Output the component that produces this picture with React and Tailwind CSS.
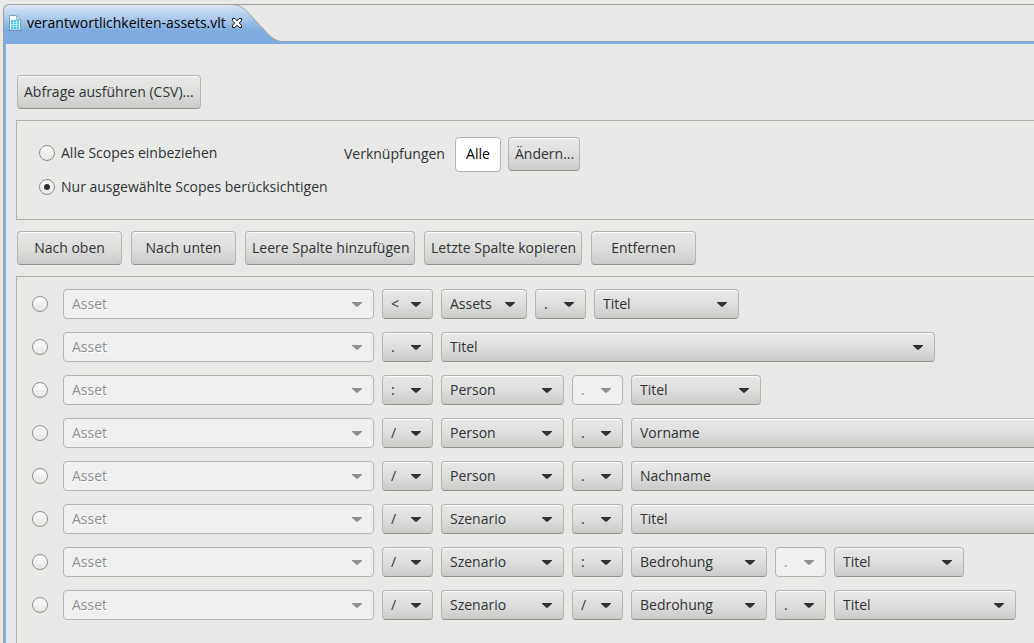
import React from "react";

const FACE =
  "rounded-[4px] border border-[#b4b4b1] border-b-[#92928e] bg-linear-to-b from-[#e8e8e6] via-[#dededc] to-[#cbcbc9] shadow-[inset_0_1px_0_#fafafa]";

const RADIO =
  "m-0 grid size-4 shrink-0 appearance-none place-content-center rounded-full border border-[#8f8f8a] bg-linear-to-b from-[#fcfcfc] to-[#e6e6e5] before:size-[6px] before:rounded-full before:content-[''] checked:before:bg-[#2e3436]";

function Button({ children, className = "" }) {
  return (
    <button type="button" className={`h-[34px] shrink-0 px-[6px] whitespace-nowrap ${FACE} ${className}`}>
      {children}
    </button>
  );
}

const WIDTHS = {
  source: "w-[311px]",
  op: "w-[51px]",
  assets: "w-[86px]",
  entity: "w-[123px]",
  threat: "w-[136px]",
  short: "w-[130px]",
  medium: "w-[145px]",
  long: "w-[182px]",
  full: "w-[494px]",
};

function Dropdown({ value, size, label, disabled = false }) {
  const look = disabled
    ? "rounded-[4px] border border-[#b4b4b1] bg-[#f0f0f0] text-[#8d9091] opacity-100 [text-shadow:1px_1px_0_#ffffff]"
    : FACE;
  return (
    <div className={`grid h-[30px] shrink-0 items-center ${WIDTHS[size]}`}>
      <select
        aria-label={label}
        disabled={disabled}
        defaultValue={value}
        className={`col-start-1 row-start-1 h-[30px] w-full appearance-none py-0 pr-6 pl-2 ${look}`}
      >
        <option>{value}</option>
      </select>
      <svg
        aria-hidden="true"
        viewBox="0 0 10 5"
        className={`pointer-events-none relative col-start-1 row-start-1 mr-3 h-[5px] w-[10px] justify-self-end ${
          disabled ? "text-[#8d9091]" : "text-[#2e3436]"
        }`}
      >
        <path d="M0 0H10V.7L6.2 4.3Q5 5.3 3.8 4.3L0 .7Z" fill="currentColor" />
      </svg>
    </div>
  );
}

const ROWS = [
  [["<", "op"], ["Assets", "assets"], [".", "op"], ["Titel", "medium"]],
  [[".", "op"], ["Titel", "full"]],
  [[":", "op"], ["Person", "entity"], [".", "op", true], ["Titel", "short"]],
  [["/", "op"], ["Person", "entity"], [".", "op"], ["Vorname", "full"]],
  [["/", "op"], ["Person", "entity"], [".", "op"], ["Nachname", "full"]],
  [["/", "op"], ["Szenario", "entity"], [".", "op"], ["Titel", "full"]],
  [["/", "op"], ["Szenario", "entity"], [":", "op"], ["Bedrohung", "threat"], [".", "op", true], ["Titel", "short"]],
  [["/", "op"], ["Szenario", "entity"], ["/", "op"], ["Bedrohung", "threat"], [".", "op"], ["Titel", "long"]],
];

function FileIcon() {
  return (
    <svg aria-hidden="true" viewBox="0 0 14 16" className="h-4 w-[14px] shrink-0">
      <path d="M0 15.5H14" stroke="#5d84b4" opacity=".8" />
      <path d="M1.5 .5H8.5L12.5 4.5V15H1.5Z" fill="#f1f8fa" stroke="#7fa3b0" />
      <path d="M8.5 .5V4.5H12.5Z" fill="#d2e4ea" stroke="#8fb0bd" />
      <path d="M3 5H11V14H3Z" fill="#3fc8f2" />
      <path d="M3 7.5H11M3 9.5H11M3 11.5H11M5.5 5V14M8.5 5V14" stroke="#d4f4fd" strokeWidth=".7" />
    </svg>
  );
}

function TabBar() {
  return (
    <header className="flex h-10 shrink-0 items-stretch">
      <div className="flex items-center gap-[5px] rounded-tl-[6px] border-t border-l border-[#a0a09c] bg-linear-to-b from-[#dce7f5] to-[#7fade1] to-65% pb-1 pl-1">
        <FileIcon />
        <span className="whitespace-nowrap text-black">verantwortlichkeiten-assets.vlt</span>
        <button
          type="button"
          aria-label="Schließen"
          className="relative z-10 -mr-3 flex size-3 items-center justify-center"
        >
          <svg aria-hidden="true" viewBox="0 0 12 12" className="size-3">
            <path
              d="M1.5 1.5H4L6 3.8L8 1.5H10.5V3.7L8.3 6L10.5 8.3V10.5H8L6 8.2L4 10.5H1.5V8.3L3.7 6L1.5 3.7Z"
              fill="#fff"
              stroke="#111"
            />
          </svg>
        </button>
      </div>
      <svg aria-hidden="true" viewBox="0 0 53 40" className="h-10 w-[53px] shrink-0">
        <defs>
          <linearGradient id="tab-fill" gradientUnits="userSpaceOnUse" x1="0" y1="0" x2="0" y2="40">
            <stop offset="0" stopColor="#dce7f5" />
            <stop offset=".65" stopColor="#7fade1" />
          </linearGradient>
        </defs>
        <path d="M0 .5C6 .5 11 2.5 16 7.5L37 30C42 35 46 37.5 53 37.5V40H0Z" fill="url(#tab-fill)" />
        <path d="M0 .5C6 .5 11 2.5 16 7.5L37 30C42 35 46 37.5 53 37.5" fill="none" stroke="#a0a09c" />
        <path d="M0 .5H53" stroke="#a0a09c" />
      </svg>
      <div className="flex flex-1 flex-col justify-end border-t border-[#a0a09c]">
        <div className="h-[3px] border-t border-[#8e9db0] bg-[#80afe3]" />
      </div>
    </header>
  );
}

export default function App() {
  return (
    <div className="flex min-h-screen flex-col overflow-hidden bg-[#e8e8e6] pt-1 pl-[3px] font-['Open_Sans','Noto_Sans',sans-serif] text-[14px] leading-5 text-[#2e3436]">
      <TabBar />
      <main className="flex flex-1 flex-col border-l border-[#a0a09c]">
        <div className="flex flex-1 flex-col border-l-2 border-[#80afe3] pt-[31px] pl-[10px]">
          <div className="flex pl-px">
            <Button>Abfrage ausführen (CSV)...</Button>
          </div>

          <section className="mt-[11px] flex h-[100px] border border-r-0 border-[#b0b0ad] pt-4 pl-[22px]">
            <fieldset className="flex w-[305px] shrink-0 flex-col gap-[14px] pt-[6px]">
              <label className="flex items-center gap-[6px]">
                <input type="radio" name="scope" className={RADIO} />
                Alle Scopes einbeziehen
              </label>
              <label className="flex items-center gap-[6px]">
                <input type="radio" name="scope" defaultChecked className={RADIO} />
                Nur ausgewählte Scopes berücksichtigen
              </label>
            </fieldset>
            <div className="flex items-start">
              <label htmlFor="links" className="w-[111px] pt-[7px]">Verknüpfungen</label>
              <input
                id="links"
                readOnly
                value="Alle"
                className="h-[35px] w-[46px] rounded-[4px] border border-[#b4b4b1] bg-white pb-[2px] text-center text-black"
              />
              <Button className="ml-[7px] w-[72px]">Ändern...</Button>
            </div>
          </section>

          <div className="mt-[11px] flex gap-[9px] pl-px">
            <Button className="w-[105px]">Nach oben</Button>
            <Button className="w-[105px]">Nach unten</Button>
            <Button className="w-[170px]">Leere Spalte hinzufügen</Button>
            <Button className="w-[158px]">Letzte Spalte kopieren</Button>
            <Button className="w-[105px]">Entfernen</Button>
          </div>

          <section className="mt-[11px] flex flex-1 flex-col gap-[13px] border-t border-l border-[#b0b0ad] pt-3 pb-5 pl-[15px]">
            {ROWS.map((row, i) => (
              <div key={i} className="flex items-center gap-2">
                <input type="radio" name="column" aria-label={`Spalte ${i + 1}`} className={`mr-[7px] ${RADIO}`} />
                <Dropdown value="Asset" size="source" label={`Spalte ${i + 1}: Typ`} disabled />
                {row.map(([value, size, disabled], j) => (
                  <Dropdown key={j} value={value} size={size} disabled={disabled} label={`Spalte ${i + 1}: Feld ${j + 1}`} />
                ))}
              </div>
            ))}
          </section>
        </div>
      </main>
    </div>
  );
}
